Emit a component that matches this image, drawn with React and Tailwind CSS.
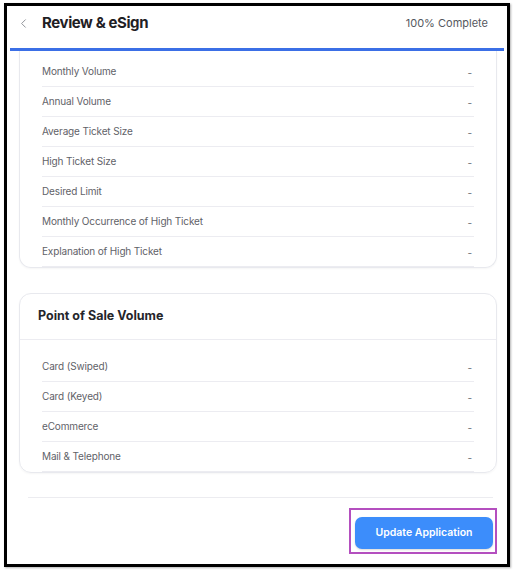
import React from 'react';
import { ChevronLeft } from 'lucide-react';

const volumeRows = [
  'Monthly Volume',
  'Annual Volume',
  'Average Ticket Size',
  'High Ticket Size',
  'Desired Limit',
  'Monthly Occurrence of High Ticket',
  'Explanation of High Ticket',
];

const posRows = ['Card (Swiped)', 'Card (Keyed)', 'eCommerce', 'Mail & Telephone'];

function Row({ label }) {
  return (
    <div className="mx-[22px] h-[30px] flex items-center justify-between border-b border-[#ececf1]">
      <span className="text-[10px] tracking-[-0.15px] text-[#5f6268]">{label}</span>
      <span className="text-[10px] text-[#6b6e75] pr-[2px] pt-[3px]">-</span>
    </div>
  );
}

export default function App() {
  return (
    <div className="w-[515px] h-[576px] bg-white pt-[3px] pl-[4px]" style={{ fontFamily: 'Inter, "Noto Sans", sans-serif' }}>
      <div className="w-[506px] h-[564px] border-[3px] border-black bg-white flex flex-col overflow-hidden shadow-[1px_1px_2px_rgba(0,0,0,0.3)]">
        {/* header */}
        <div className="h-[42px] pb-[8px] flex items-center pl-[9px] pr-[19px]">
          <ChevronLeft size={15} strokeWidth={1.5} className="text-[#8a8d93]" />
          <h1 className="ml-[11px] text-[15px] font-bold text-[#1f2024] tracking-[-0.4px]">Review &amp; eSign</h1>
          <span className="ml-auto text-[11px] text-[#55585e]">100% Complete</span>
        </div>
        <div className="h-[3px] mx-[3px] bg-[#3b6fe6]" />

        {/* scrolled content */}
        <div className="flex-1 flex flex-col">
          <div className="ml-[12px] mr-[10px] pt-[6px] border-x border-b border-[#e8e9ee] rounded-b-[12px] shadow-[0_1px_2px_rgba(0,0,0,0.04)]">
            {volumeRows.map((r) => (
              <Row key={r} label={r} />
            ))}
          </div>

          <div className="mt-[25px] ml-[12px] mr-[10px] border border-[#e8e9ee] rounded-[12px] shadow-[0_1px_2px_rgba(0,0,0,0.04)]">
            <div className="h-[46px] flex items-center px-[18px] border-b border-[#ececf1]">
              <h2 className="text-[12.5px] font-bold text-[#25262b]">Point of Sale Volume</h2>
            </div>
            <div className="pt-[12px]">
              {posRows.map((r) => (
                <Row key={r} label={r} />
              ))}
            </div>
          </div>

          <div className="mt-[24px] ml-[21px] mr-[14px] h-px bg-[#ececf0]" />

          <div className="mt-[10px] mr-[10px] self-end w-[148px] h-[46px] border-2 border-[#b44fbf] pl-[4px] pr-[2px] pt-[7px] pb-[3px]">
            <button className="w-full h-[32px] rounded-[7px] bg-[#3c8dfb] text-white text-[10.5px] font-semibold shadow-[0_1px_2px_rgba(0,0,0,0.15)]">
              Update Application
            </button>
          </div>
        </div>
      </div>
    </div>
  );
}
